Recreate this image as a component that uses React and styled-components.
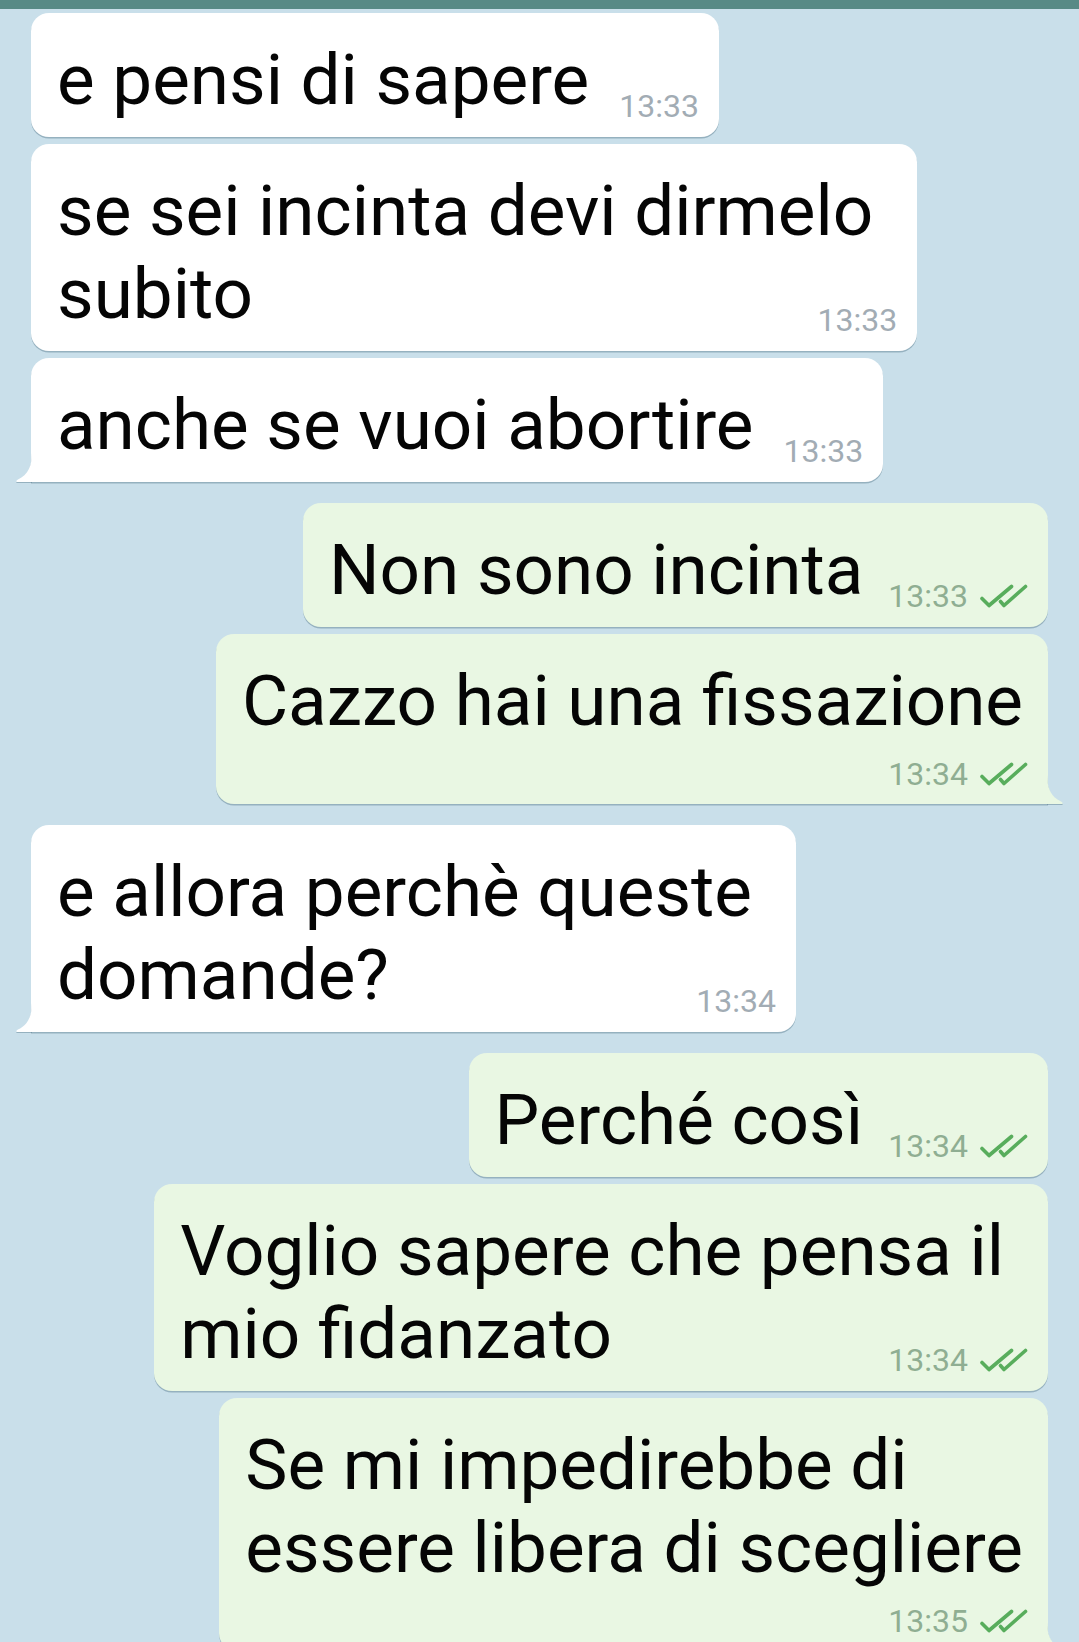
import React from 'react';
import styled, { createGlobalStyle, css } from 'styled-components';

const GlobalStyle = createGlobalStyle`
  html, body {
    margin: 0;
    padding: 0;
  }
  body {
    background: #c9dfea;
    font-family: Roboto, "Noto Sans", "Liberation Sans", sans-serif;
    overflow: hidden;
  }
`

const Screen = styled.div`
  height: 100vh;
  overflow: hidden;
  background: #c9dfea;
`
const TopBar = styled.div`
  height: 9px;
  background: #588a86;
`
const Thread = styled.div`
  display: flex;
  flex-direction: column;
  gap: 21px;
  padding: 4px 31px 0;
`
const Group = styled.div`
  display: flex;
  flex-direction: column;
  gap: 7px;
  align-items: ${p => (p.$out ? 'flex-end' : 'flex-start')};
`
const Bubble = styled.div`
  position: relative;
  display: grid;
  max-width: 920px;
  box-sizing: border-box;
  padding: 25px ${p => (p.$wide ? '44px' : '25px')} 16px 26px;
  border-radius: 18px;
  background: ${p => (p.$out ? '#e9f7e3' : '#ffffff')};
  box-shadow: 0 1.5px 0.5px rgba(86, 122, 140, 0.45);
  ${p => p.$tail && (p.$out
    ? css`border-bottom-right-radius: 0;`
    : css`border-bottom-left-radius: 0;`)}
`
const Tail = styled.svg`
  position: absolute;
  bottom: 0;
  width: 17px;
  height: 30px;
  filter: drop-shadow(0 1.5px 0.5px rgba(86, 122, 140, 0.45));
  ${p => (p.$out
    ? css`right: -16px; transform: scaleX(-1);`
    : css`left: -16px;`)}
`
const Text = styled.div`
  grid-area: 1 / 1;
  font-size: 71px;
  line-height: 83px;
  color: #050505;
`
// invisible copy of the time, keeps room for it on the last line
const Spacer = styled.span`
  display: inline-flex;
  gap: 6px;
  visibility: hidden;
  height: 0;
  overflow: hidden;
  padding-left: 25px;
  font-size: 32px;
  vertical-align: baseline;
`
const Meta = styled.div`
  display: flex;
  align-items: center;
  gap: 11px;
  justify-self: end;
  margin-right: ${p => (p.$wide ? '-24px' : '-5px')};
  font-size: 32px;
  line-height: 38px;
  color: ${p => (p.$out ? '#8fae92' : '#a2acb4')};
  ${p => (p.$stacked
    ? css`grid-row: 2; margin-top: 13px; margin-bottom: -5px;`
    : css`grid-area: 1 / 1; align-self: end; margin-bottom: -4px;`)}
`
const Checks = styled.svg`
  width: 49px;
  height: 24px;
`

const DoubleCheck = () => (
  <Checks viewBox="0 0 49 24" fill="none" stroke="#58ad5c" strokeWidth="3.6" strokeLinecap="round" strokeLinejoin="round">
    <path d="M3 14.5 L10 21.5 L32.5 2.5" />
    <path d="M21.5 17.5 L25 21.5 L46.5 2.5" />
  </Checks>
)

const MetaContent = ({ time, out }) => (
  <>
    <span>{time}</span>
    {out ? <DoubleCheck /> : null}
  </>
)

const Message = ({ lines, time, out, tail, stacked }) => {
  const wide = lines.length > 1 && !stacked
  return (
    <Bubble $out={out} $tail={tail} $wide={wide}>
      <Text>
        {lines.map((l, i) => (
          <React.Fragment key={i}>
            {i > 0 ? <br /> : null}
            {l}
          </React.Fragment>
        ))}
        {!stacked ? (
          <Spacer aria-hidden="true">
            <MetaContent time={time} out={out} />
          </Spacer>
        ) : null}
      </Text>
      <Meta $out={out} $stacked={stacked} $wide={wide}>
        <MetaContent time={time} out={out} />
      </Meta>
      {tail ? (
        <Tail $out={out} viewBox="0 0 17 30">
          <path d="M17 0 C17 14 13 23 3 27.5 C1 28.5 0.5 30 2.5 30 L17 30 Z" fill={out ? '#e9f7e3' : '#ffffff'} />
        </Tail>
      ) : null}
    </Bubble>
  )
}

const groups = [
  {
    out: false,
    messages: [
      { lines: ['e pensi di sapere'], time: '13:33' },
      { lines: ['se sei incinta devi dirmelo', 'subito'], time: '13:33' },
      { lines: ['anche se vuoi abortire'], time: '13:33' },
    ],
  },
  {
    out: true,
    messages: [
      { lines: ['Non sono incinta'], time: '13:33' },
      { lines: ['Cazzo hai una fissazione'], time: '13:34', stacked: true },
    ],
  },
  {
    out: false,
    messages: [
      { lines: ['e allora perchè queste', 'domande?'], time: '13:34' },
    ],
  },
  {
    out: true,
    messages: [
      { lines: ['Perché così'], time: '13:34' },
      { lines: ['Voglio sapere che pensa il', 'mio fidanzato'], time: '13:34' },
      { lines: ['Se mi impedirebbe di', 'essere libera di scegliere'], time: '13:35', stacked: true },
    ],
  },
]

const App = () => {
  return (
    <Screen>
      <GlobalStyle />
      <TopBar />
      <Thread>
        {groups.map((g, gi) => (
          <Group key={gi} $out={g.out}>
            {g.messages.map((m, mi) => (
              <Message
                key={mi}
                {...m}
                out={g.out}
                tail={mi === g.messages.length - 1}
              />
            ))}
          </Group>
        ))}
      </Thread>
    </Screen>
  )
}

export default App;
